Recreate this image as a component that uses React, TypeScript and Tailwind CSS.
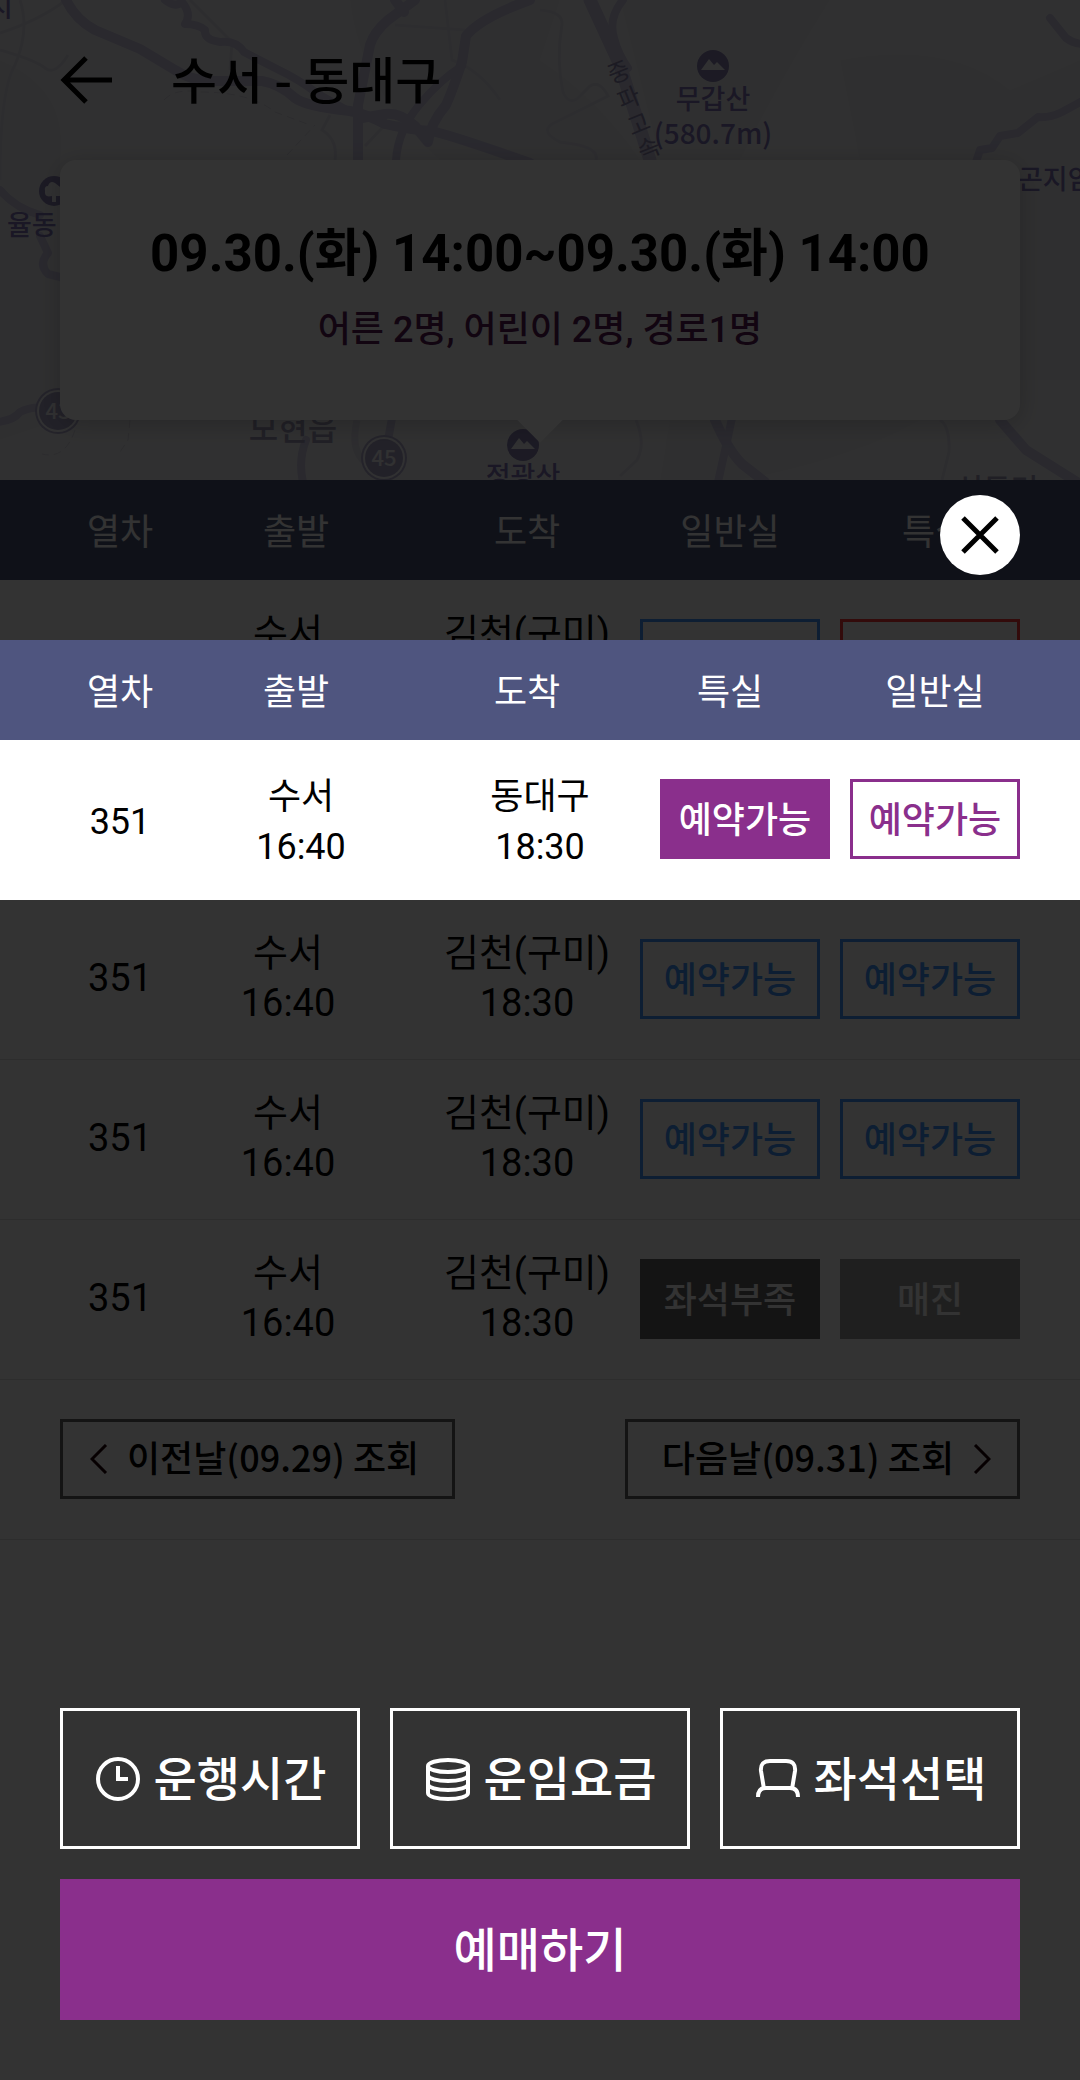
import React from "react";

const MIXED = "font-['Roboto','Noto_Sans_CJK_KR',sans-serif]";
const KR = "font-['Noto_Sans_CJK_KR',sans-serif]";

type SeatState = "open" | "picked" | "outlined" | "few" | "soldout" | "alert";

const seatStyles: Record<SeatState, string> = {
  open: "border-[3px] border-[#4098ff] text-[#4098ff]",
  alert: "border-[3px] border-[#ff3b3b] text-[#ff3b3b]",
  few: "bg-[#646464] text-white",
  soldout: "bg-[#9b9b9b] text-white",
  picked: "bg-[#8a2f8c] text-white",
  outlined: "border-[3px] border-[#8a2f8c] text-[#8a2f8c]",
};

function SeatButton({ state, label }: { state: SeatState; label: string }) {
  return (
    <button
      type="button"
      className={`flex h-20 w-full items-center justify-center whitespace-nowrap pb-1 text-4xl font-medium ${KR} ${seatStyles[state]}`}
    >
      {label}
    </button>
  );
}

function Columns() {
  return (
    <colgroup>
      <col className="w-8/45" />
      <col className="w-19/90" />
      <col className="w-7/36" />
      <col className="w-5/27" />
      <col className="w-25/108" />
    </colgroup>
  );
}

function TableHead({ fourth, fifth, color }: { fourth: string; fifth: string; color: string }) {
  return (
    <thead>
      <tr className={`h-[100px] text-4xl text-white ${color} ${KR}`}>
        <th className="pb-0.5 pl-12 font-normal">열차</th>
        <th className="pb-0.5 pr-5 font-normal">출발</th>
        <th className="pb-0.5 pl-1 font-normal">도착</th>
        <th className="pb-0.5 font-normal">{fourth}</th>
        <th className="pb-0.5 pr-10 font-normal">{fifth}</th>
      </tr>
    </thead>
  );
}

/* null marks the selected train, whose row is lifted into the dialog */
const trains: ({ first: [SeatState, string]; general: [SeatState, string] } | null)[] = [
  { first: ["open", "예약가능"], general: ["alert", "예약가능"] },
  null,
  { first: ["open", "예약가능"], general: ["open", "예약가능"] },
  { first: ["open", "예약가능"], general: ["open", "예약가능"] },
  { first: ["few", "좌석부족"], general: ["soldout", "매진"] },
];

const ROAD = "#cfcbe6";
const LABEL = "#8076b8";

function Mountain({ x, y }: { x: number; y: number }) {
  return (
    <g transform={`translate(${x} ${y})`}>
      <circle r="16" fill="#8a82b4" />
      <path d="M-12 4 L-4 -7 L1 -1 L4 -4 L12 4 Z" fill="#f3f3f8" />
    </g>
  );
}

function RoadShield({ x, y, label }: { x: number; y: number; label: string }) {
  return (
    <g transform={`translate(${x} ${y})`}>
      <circle r="23" fill="#b4afd0" />
      <circle r="21" fill="#f3f3f8" />
      <circle r="19" fill="#aaa5c8" />
      <text y="8" textAnchor="middle" fontSize="22" fontWeight="500" fill="#f3f3f8">
        {label}
      </text>
    </g>
  );
}

function MapBackdrop() {
  return (
    <svg
      aria-hidden="true"
      className={`absolute inset-0 h-full w-full ${KR}`}
      viewBox="0 0 1080 480"
      preserveAspectRatio="xMidYMid slice"
    >
      <rect width="1080" height="480" fill="#f1f1f4" />
      <g fill="#ececf0">
        <path d="M0 60 Q70 90 60 160 L60 420 L0 440 Z" />
        <path d="M350 0 L560 0 L540 60 Q600 100 640 160 L440 160 Q360 90 350 0 Z" />
        <path d="M620 0 L830 0 Q780 80 740 160 L660 160 Z" />
        <path d="M840 60 Q950 40 1010 90 L1080 60 V380 H1020 V160 H860 Z" />
        <path d="M670 420 L920 420 Q850 460 740 480 L660 480 Z" />
      </g>
      <g fill="none" stroke="#e1dfec" strokeWidth="3">
        <path d="M0 33 Q40 20 66 0 M0 50 Q35 60 45 68 T68 55 M20 0 Q30 30 15 65 Q0 90 0 180" />
        <path d="M190 0 L232 42 L230 70 M395 25 L465 30 M445 0 L452 60 Q480 70 500 100" />
        <path d="M540 10 Q563 12 562 24 Q556 60 563 92 Q568 104 577 99 L590 86 Q600 80 608 96 L552 124 Q540 132 560 142 Q600 146 596 160" />
        <path d="M365 146 L382 128 L412 118 M330 115 L322 130 Q338 140 335 160" />
        <path d="M940 420 Q950 426 949 452 L942 480 M636 420 Q646 444 637 460 L620 476" />
        <path d="M357 420 Q350 450 365 462" strokeWidth="7" />
      </g>
      <path
        d="M164 100 Q175 88 200 92 Q250 92 275 112 L310 125 M287 155 L315 125 M130 420 L128 440 L120 452 M75 430 Q65 460 42 454"
        fill="none"
        stroke="#dad8e4"
        strokeWidth="1"
        strokeDasharray="8 5"
      />
      <g fill="none" stroke={ROAD} strokeLinejoin="round" strokeLinecap="round">
        <g strokeWidth="10">
          <path d="M66 0 Q76 20 95 30 L140 49 L175 70 Q190 80 210 81 L262 81 Q280 84 295 98 Q305 106 350 111 Q366 114 385 124 Q410 130 432 131 Q460 138 530 163" />
          <path d="M358 160 V105 L370 45 Q374 32 388 20 L415 0" />
          <path d="M395 0 L404 12" />
          <path d="M530 0 Q480 18 466 36 L462 62 Q452 92 446 105 Q430 124 428 142 L415 126 Q400 112 385 114 L362 118" />
          <path d="M590 0 L620 65 L650 160" strokeWidth="13" />
          <path d="M715 420 Q728 450 742 464 L765 482" />
          <path d="M1000 420 L1026 450 L1080 484" />
        </g>
        <g strokeWidth="8">
          <path d="M165 0 Q175 8 182 2 Q192 14 185 24 Q198 24 205 30 Q204 40 220 42 Q236 40 244 52 L275 68 Q300 80 318 94 L350 112" />
          <path d="M462 66 Q440 80 420 104 Q398 130 396 160" />
          <path d="M623 0 Q608 18 614 38 Q618 54 628 68" />
          <path d="M1050 18 L1066 38 Q1074 44 1084 44" />
          <path d="M1084 100 L1062 112 Q1050 118 1038 117 L1018 133 L1000 136 L992 148 L980 150 L976 162" />
          <path d="M0 190 Q15 208 40 215 M40 236 L48 253 Q38 264 48 274 L64 278" />
          <path d="M-2 422 Q14 420 20 412 Q32 406 46 408" />
          <path d="M392 418 L387 446 M306 440 Q298 460 303 482 M732 418 L726 446 L718 482" />
        </g>
      </g>
      <g fill={LABEL} fontSize="27" fontWeight="500">
        <text x="-12" y="17">시</text>
        <text x="713" y="109" textAnchor="middle">무갑산</text>
        <text x="713" y="144" textAnchor="middle" fontSize="28">(580.7m)</text>
        <text x="1018" y="189">곤지암</text>
        <text x="7" y="235">율동</text>
        <text x="523" y="486" textAnchor="middle">정광산</text>
        <g fill="#a19cba">
          <text x="293" y="440" textAnchor="middle" fontSize="32">모현읍</text>
          <text x="997" y="500" textAnchor="middle" fontSize="30">신둔면</text>
        </g>
        <g fill="#8e87ae" fontSize="24" fontWeight="400" textAnchor="middle">
          <text transform="translate(622 80) rotate(-22)">중</text>
          <text transform="translate(632 106) rotate(-22)">파</text>
          <text transform="translate(642 132) rotate(-22)">고</text>
          <text transform="translate(652 156) rotate(-22)">속</text>
        </g>
      </g>
      <Mountain x={713} y={66} />
      <Mountain x={523} y={445} />
      <circle cx="54" cy="191" r="15" fill="#8a82b4" />
      <path d="M52 202 V196 Q44 198 45 191 Q44 186 48 186 Q50 180 55 183 L64 190 V196 H56 V202 Z" fill="#f3f3f8" />
      <RoadShield x={58} y={411} label="43" />
      <RoadShield x={384} y={458} label="45" />
    </svg>
  );
}

function ClockIcon() {
  return (
    <svg aria-hidden="true" viewBox="0 0 44 44" className="h-11 w-11 shrink-0" fill="none" stroke="currentColor" strokeWidth="4">
      <circle cx="22" cy="22" r="20" />
      <path d="M22 9 V22 H32" />
    </svg>
  );
}

function CoinsIcon() {
  return (
    <svg aria-hidden="true" viewBox="0 0 44 44" className="h-11 w-11 shrink-0" fill="none" stroke="currentColor" strokeWidth="4">
      <ellipse cx="22" cy="9" rx="20" ry="6" />
      <path d="M2 9 V36 C2 39.500 11 42 22 42 S42 39.500 42 36 V9" />
      <path d="M2 18 C2 21.500 11 24 22 24 S42 21.500 42 18 M2 27 C2 30.500 11 33 22 33 S42 30.500 42 27" />
    </svg>
  );
}

function SeatIcon() {
  return (
    <svg aria-hidden="true" viewBox="0 0 44 44" className="h-11 w-11 shrink-0" fill="none" stroke="currentColor" strokeWidth="4">
      <path d="M8 32 L5 14 Q4 4 14 4 H30 Q40 4 39 14 L36 32" />
      <path d="M2 40 Q2 31 10 31 H34 Q42 31 42 40" />
    </svg>
  );
}

const actions = [
  { label: "운행시간", icon: <ClockIcon /> },
  { label: "운임요금", icon: <CoinsIcon /> },
  { label: "좌석선택", icon: <SeatIcon /> },
];

const CELL = "border-b border-[#e0e0e0]";

function TrainList() {
  return (
    <table className="w-full table-fixed border-separate border-spacing-0 text-center text-black">
      <Columns />
      <TableHead fourth="일반실" fifth="특실" color="bg-[#4a567a]" />
      <tbody>
        {trains.map((train, i) =>
          train === null ? (
            <tr key={i} className="h-40">
              <td colSpan={5} className={CELL} />
            </tr>
          ) : (
            <tr key={i} className={`h-40 text-[38px] leading-[50px] ${MIXED}`}>
              <td className={`${CELL} pb-1 pl-12`}>351</td>
              <td className={`${CELL} pb-1 pr-9`}>
                <div>수서</div>
                <div>16:40</div>
              </td>
              <td className={`${CELL} whitespace-nowrap pb-1 pl-1`}>
                <div>김천(구미)</div>
                <div>18:30</div>
              </td>
              <td className={`${CELL} px-2.5 pb-0.5`}>
                <SeatButton state={train.first[0]} label={train.first[1]} />
              </td>
              <td className={`${CELL} pb-0.5 pl-2.5 pr-[60px]`}>
                <SeatButton state={train.general[0]} label={train.general[1]} />
              </td>
            </tr>
          ),
        )}
      </tbody>
    </table>
  );
}

function SelectedTrain() {
  return (
    <table className="w-full table-fixed border-separate border-spacing-0 bg-white text-center text-black">
      <Columns />
      <TableHead fourth="특실" fifth="일반실" color="bg-[#4f557f]" />
      <tbody>
        <tr className={`h-40 text-4xl leading-[50px] ${MIXED}`}>
          <td className="pl-12 pt-1">351</td>
          <td className="pr-2.5 pt-1">
            <div>수서</div>
            <div>16:40</div>
          </td>
          <td className="pl-[30px] pt-1">
            <div>동대구</div>
            <div>18:30</div>
          </td>
          <td className="pb-0.5 pl-[30px]">
            <SeatButton state="picked" label="예약가능" />
          </td>
          <td className="pb-0.5 pl-5 pr-[60px]">
            <SeatButton state="outlined" label="예약가능" />
          </td>
        </tr>
      </tbody>
    </table>
  );
}

export default function App() {
  return (
    <div className={`relative flex min-h-screen flex-col bg-white text-black ${KR}`}>
      <header className="relative overflow-hidden px-[60px] pb-[60px]">
        <MapBackdrop />
        <div className="relative flex h-40 items-center gap-[59px]">
          <button type="button" aria-label="뒤로" className="shrink-0">
            <svg viewBox="0 0 52 48" className="h-12 w-[52px]" fill="none" stroke="currentColor" strokeWidth="5">
              <path d="M26 2 L4 24 L26 46 M4 24 H52" />
            </svg>
          </button>
          <h1 className="pb-1.5 text-[50px] font-medium leading-none">수서 - 동대구</h1>
        </div>
        <div className={`relative h-[260px] rounded-2xl bg-white pt-[62px] text-center shadow-[0_4px_24px_rgba(0,0,0,0.2)] ${MIXED}`}>
          <p className="whitespace-nowrap text-[51px] font-bold leading-[64px]">09.30.(화) 14:00~09.30.(화) 14:00</p>
          <p className="mt-5 text-4xl font-medium leading-[48px] text-[#5a1c55]">어른 2명, 어린이 2명, 경로1명</p>
          <span className="absolute -bottom-4 left-1/2 h-8 w-8 -translate-x-1/2 rotate-45 bg-white" />
        </div>
      </header>

      <TrainList />

      <nav className="flex h-40 items-center justify-between border-b border-[#e0e0e0] px-[60px] pb-0.5">
        <button type="button" className="flex h-20 w-[395px] items-center gap-[19px] border-[3px] border-[#646464] pl-[27px] text-4xl font-medium">
          <svg aria-hidden="true" viewBox="0 0 18 30" className="h-[30px] w-[18px]" fill="none" stroke="#200008" strokeWidth="3">
            <path d="M16 1 L2 15 L16 29" />
          </svg>
          <span className="pb-1.5">이전날(09.29) 조회</span>
        </button>
        <button type="button" className="flex h-20 w-[395px] items-center justify-end gap-[19px] border-[3px] border-[#646464] pr-[26px] text-4xl font-medium">
          <span className="pb-1.5">다음날(09.31) 조회</span>
          <svg aria-hidden="true" viewBox="0 0 18 30" className="h-[30px] w-[18px]" fill="none" stroke="#200008" strokeWidth="3">
            <path d="M2 1 L16 15 L2 29" />
          </svg>
        </button>
      </nav>

      <section role="dialog" aria-label="선택한 열차" className="absolute inset-0 flex flex-col bg-black/80 pt-[495px]">
        <button
          type="button"
          aria-label="닫기"
          className="mb-[65px] mr-[60px] flex h-20 w-20 shrink-0 items-center justify-center self-end rounded-full bg-white"
        >
          <svg viewBox="0 0 38 38" className="h-[38px] w-[38px]" fill="none" stroke="black" strokeWidth="5">
            <path d="M2 2 L36 36 M36 2 L2 36" />
          </svg>
        </button>
        <SelectedTrain />
        <div className="mt-auto flex flex-col gap-[30px] px-[60px] pb-[60px] text-white">
          <div className="grid grid-cols-3 gap-[30px]">
            {actions.map((action) => (
              <button
                key={action.label}
                type="button"
                className="flex h-[141px] items-center justify-center gap-3.5 whitespace-nowrap border-[3px] border-white pl-0.5 text-[47px] font-medium"
              >
                {action.icon}
                <span className="pb-1.5 leading-none">{action.label}</span>
              </button>
            ))}
          </div>
          <button type="button" className="flex h-[141px] items-center justify-center bg-[#8a2f8c] text-[47px] font-medium">
            <span className="pb-1.5 leading-none">예매하기</span>
          </button>
        </div>
      </section>
    </div>
  );
}
